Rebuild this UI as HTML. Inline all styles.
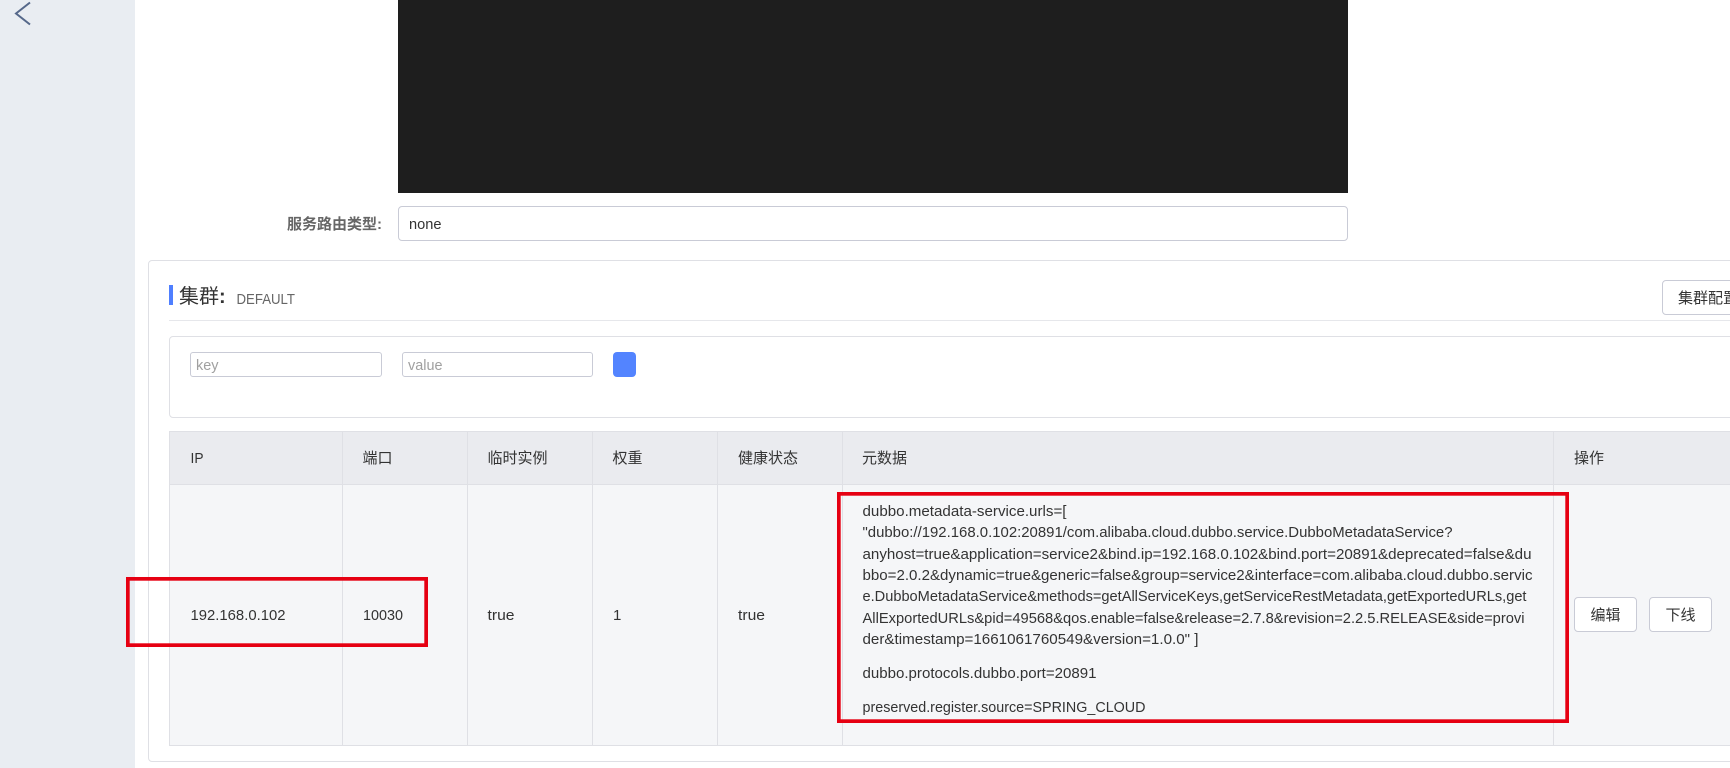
<!DOCTYPE html>
<html lang="zh">
<head>
<meta charset="utf-8">
<title>集群</title>
<style>
html,body{margin:0;padding:0;width:1730px;height:768px;overflow:hidden;background:#fff}
body{position:relative;font-family:"Liberation Sans","Noto Sans CJK SC",sans-serif;color:#333}
.a{position:absolute;box-sizing:border-box}
svg{position:absolute;left:0;top:0}
text{font-family:"Liberation Sans","Noto Sans CJK SC",sans-serif;font-size:15px;fill:#333}
</style>
</head>
<body>
<div class="a" style="left:0;top:0;width:135px;height:768px;background:#e9edf2"></div>
<div class="a" style="left:398px;top:0;width:950px;height:193px;background:#1e1e1e"></div>
<div class="a" style="left:398px;top:206px;width:950px;height:35px;border:1px solid #c9cbd6;border-radius:4px;background:#fff"></div>
<div class="a" style="left:148px;top:260px;width:1640px;height:502px;border:1px solid #dfe0e5;border-radius:4px;background:#fff"></div>
<div class="a" style="left:169px;top:285px;width:4px;height:20px;background:#4f7fff"></div>
<div class="a" style="left:169px;top:320px;width:1561px;height:1px;background:#e6e7eb"></div>
<div class="a" style="left:1662px;top:280px;width:100px;height:35px;border:1px solid #c9cbd6;border-radius:4px;background:#fff"></div>
<div class="a" style="left:169px;top:336px;width:1600px;height:82px;border:1px solid #dfe0e5;border-radius:4px;background:#fff"></div>
<div class="a" style="left:190px;top:352px;width:192px;height:25px;border:1px solid #c9cbd6;border-radius:3px"></div>
<div class="a" style="left:402px;top:352px;width:191px;height:25px;border:1px solid #c9cbd6;border-radius:3px"></div>
<div class="a" style="left:613px;top:352px;width:23px;height:25px;background:#5384ff;border-radius:4px"></div>

<div class="a" style="left:169px;top:431px;width:1600px;height:54px;background:#eaebef;border:1px solid #dfe0e5"></div>
<div class="a" style="left:169px;top:484px;width:1600px;height:262px;background:#f5f6f8;border:1px solid #dfe0e5"></div>
<div class="a" style="left:342px;top:431px;width:1px;height:314px;background:#dfe0e5"></div>
<div class="a" style="left:467px;top:431px;width:1px;height:314px;background:#dfe0e5"></div>
<div class="a" style="left:592px;top:431px;width:1px;height:314px;background:#dfe0e5"></div>
<div class="a" style="left:717px;top:431px;width:1px;height:314px;background:#dfe0e5"></div>
<div class="a" style="left:842px;top:431px;width:1px;height:314px;background:#dfe0e5"></div>
<div class="a" style="left:1553px;top:431px;width:1px;height:314px;background:#dfe0e5"></div>

<div class="a" style="left:1574px;top:597px;width:63px;height:35px;background:#fff;border:1px solid #c9cbd6;border-radius:4px"></div>
<div class="a" style="left:1649px;top:597px;width:63px;height:35px;background:#fff;border:1px solid #c9cbd6;border-radius:4px"></div>

<svg width="1730" height="768" viewBox="0 0 1730 768">
  <path d="M30 2.5 L16 13.5 L30 24.5" fill="none" stroke="#55688a" stroke-width="2"/>

  <text x="287" y="229" style="font-weight:600;fill:#666">服务路由类型:</text>
  <text x="409" y="229" textLength="32.5" lengthAdjust="spacingAndGlyphs">none</text>

  <text x="179" y="303" style="font-size:20px">集群<tspan style="font-weight:700">:</tspan></text>
  <text x="236.5" y="304" style="fill:#666" textLength="58.5" lengthAdjust="spacingAndGlyphs">DEFAULT</text>
  <text x="1678" y="303">集群配置</text>

  <text x="196" y="370" style="fill:#a0a0a0" textLength="22.5" lengthAdjust="spacingAndGlyphs">key</text>
  <text x="408" y="370" style="fill:#a0a0a0" textLength="34.5" lengthAdjust="spacingAndGlyphs">value</text>

  <text x="190.5" y="463" textLength="13" lengthAdjust="spacingAndGlyphs">IP</text>
  <text x="362.5" y="463">端口</text>
  <text x="487.5" y="463">临时实例</text>
  <text x="612.5" y="463">权重</text>
  <text x="738" y="463">健康状态</text>
  <text x="862" y="463">元数据</text>
  <text x="1574" y="463">操作</text>

  <text x="190.5" y="620" textLength="95" lengthAdjust="spacingAndGlyphs">192.168.0.102</text>
  <text x="363" y="620" textLength="40" lengthAdjust="spacingAndGlyphs">10030</text>
  <text x="487.5" y="620" textLength="27" lengthAdjust="spacingAndGlyphs">true</text>
  <text x="613" y="620">1</text>
  <text x="738" y="620" textLength="27" lengthAdjust="spacingAndGlyphs">true</text>

  <text x="862.5" y="516" textLength="204" lengthAdjust="spacingAndGlyphs">dubbo.metadata-service.urls=[</text>
  <text x="862.5" y="537" textLength="590" lengthAdjust="spacingAndGlyphs">"dubbo://192.168.0.102:20891/com.alibaba.cloud.dubbo.service.DubboMetadataService?</text>
  <text x="862.5" y="559" textLength="669" lengthAdjust="spacingAndGlyphs">anyhost=true&amp;application=service2&amp;bind.ip=192.168.0.102&amp;bind.port=20891&amp;deprecated=false&amp;du</text>
  <text x="862.5" y="580" textLength="670" lengthAdjust="spacingAndGlyphs">bbo=2.0.2&amp;dynamic=true&amp;generic=false&amp;group=service2&amp;interface=com.alibaba.cloud.dubbo.servic</text>
  <text x="862.5" y="601" textLength="664" lengthAdjust="spacingAndGlyphs">e.DubboMetadataService&amp;methods=getAllServiceKeys,getServiceRestMetadata,getExportedURLs,get</text>
  <text x="862.5" y="623" textLength="662" lengthAdjust="spacingAndGlyphs">AllExportedURLs&amp;pid=49568&amp;qos.enable=false&amp;release=2.7.8&amp;revision=2.2.5.RELEASE&amp;side=provi</text>
  <text x="862.5" y="644" textLength="336" lengthAdjust="spacingAndGlyphs">der&amp;timestamp=1661061760549&amp;version=1.0.0" ]</text>
  <text x="862.5" y="678" textLength="234" lengthAdjust="spacingAndGlyphs">dubbo.protocols.dubbo.port=20891</text>
  <text x="862.5" y="712" textLength="283" lengthAdjust="spacingAndGlyphs">preserved.register.source=SPRING_CLOUD</text>

  <text x="1590.5" y="620">编辑</text>
  <text x="1665.5" y="620">下线</text>

  <rect x="127.85" y="578.85" width="298.3" height="66.3" fill="none" stroke="#e60012" stroke-width="3.7"/>
  <rect x="838.85" y="493.85" width="728.3" height="227.3" fill="none" stroke="#e60012" stroke-width="3.7"/>
</svg>
</body>
</html>
